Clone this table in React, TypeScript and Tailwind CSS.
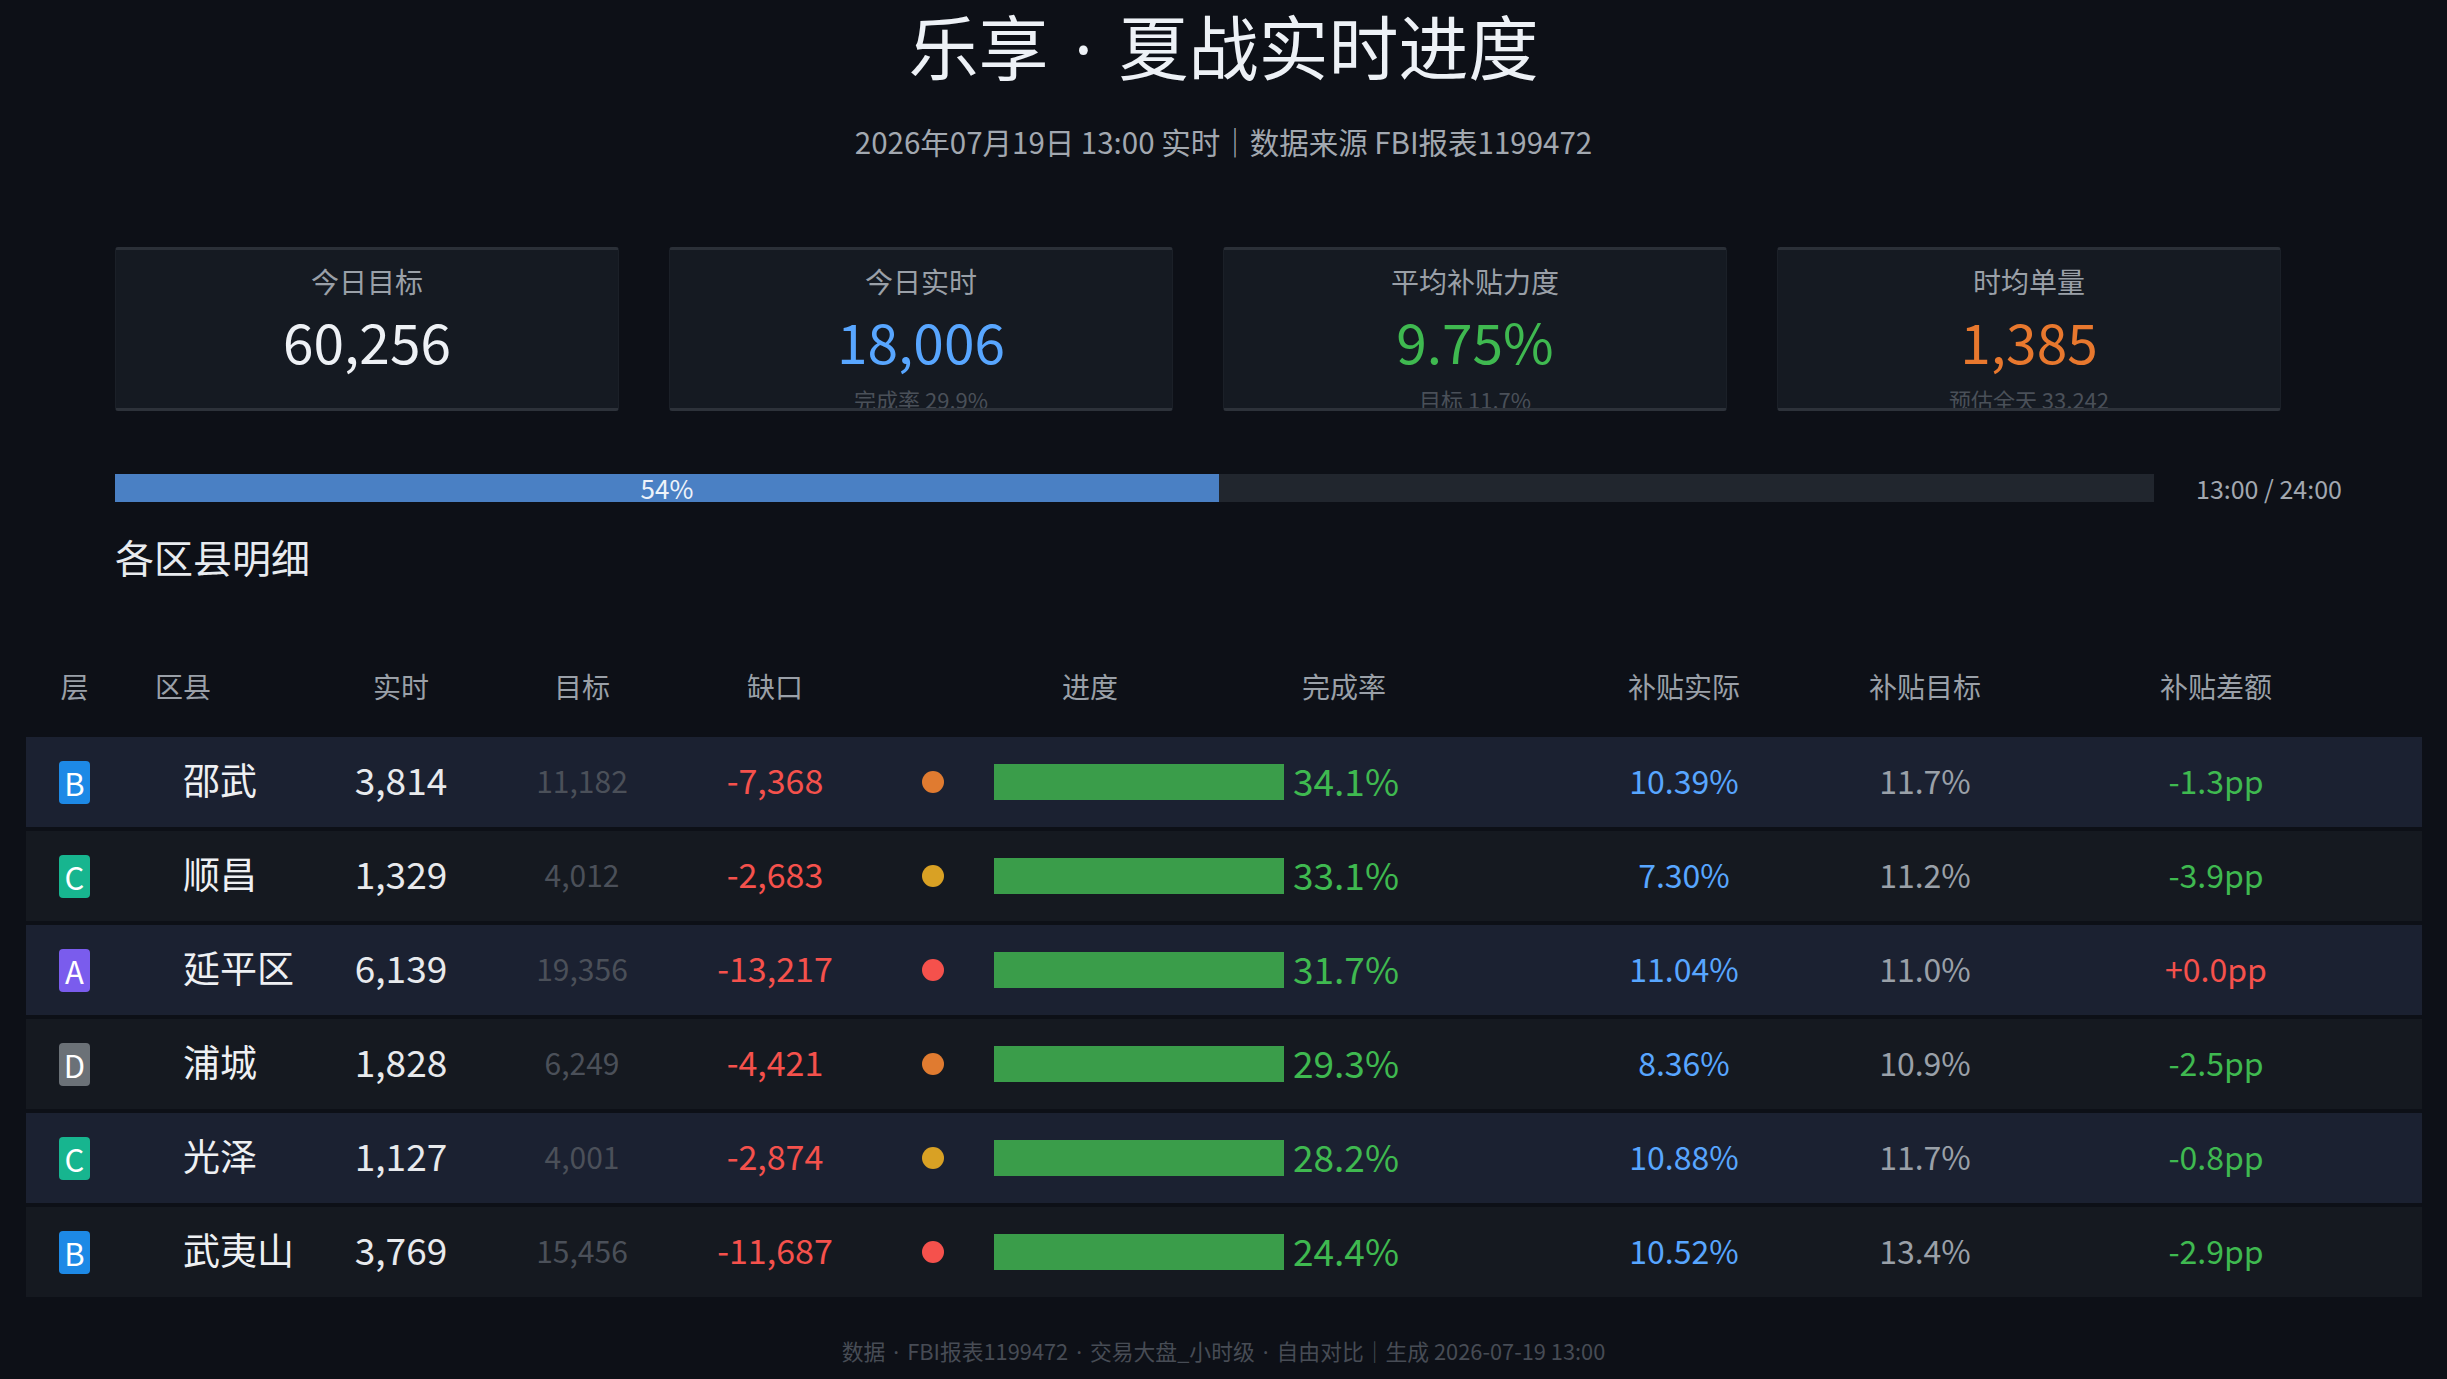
import React from "react";

type Row = {
  tier: string;
  tierBg: string;
  name: string;
  rt: string;
  tg: string;
  gap: string;
  dot: string;
  pct: string;
  sa: string;
  st: string;
  diff: string;
  diffColor: string;
};

const ORANGE = "bg-[#e07b30]";
const AMBER = "bg-[#d9a124]";
const RED = "bg-[#f5514c]";
const BLUE = "bg-[#1d89e6]";
const TEAL = "bg-[#17b58f]";
const PURPLE = "bg-[#7a5ced]";
const GRAY = "bg-[#6b7177]";
const GREEN_T = "text-[#3fb950]";
const RED_T = "text-[#f5514c]";

const rows: Row[] = [
  { tier: "B", tierBg: BLUE, name: "邵武", rt: "3,814", tg: "11,182", gap: "-7,368", dot: ORANGE, pct: "34.1%", sa: "10.39%", st: "11.7%", diff: "-1.3pp", diffColor: GREEN_T },
  { tier: "C", tierBg: TEAL, name: "顺昌", rt: "1,329", tg: "4,012", gap: "-2,683", dot: AMBER, pct: "33.1%", sa: "7.30%", st: "11.2%", diff: "-3.9pp", diffColor: GREEN_T },
  { tier: "A", tierBg: PURPLE, name: "延平区", rt: "6,139", tg: "19,356", gap: "-13,217", dot: RED, pct: "31.7%", sa: "11.04%", st: "11.0%", diff: "+0.0pp", diffColor: RED_T },
  { tier: "D", tierBg: GRAY, name: "浦城", rt: "1,828", tg: "6,249", gap: "-4,421", dot: ORANGE, pct: "29.3%", sa: "8.36%", st: "10.9%", diff: "-2.5pp", diffColor: GREEN_T },
  { tier: "C", tierBg: TEAL, name: "光泽", rt: "1,127", tg: "4,001", gap: "-2,874", dot: AMBER, pct: "28.2%", sa: "10.88%", st: "11.7%", diff: "-0.8pp", diffColor: GREEN_T },
  { tier: "B", tierBg: BLUE, name: "武夷山", rt: "3,769", tg: "15,456", gap: "-11,687", dot: RED, pct: "24.4%", sa: "10.52%", st: "13.4%", diff: "-2.9pp", diffColor: GREEN_T },
];

function Dot() {
  return <span className="inline-block w-[1em] text-center font-['Noto_Sans',sans-serif]">·</span>;
}

function Card({ label, value, valueColor, sub }: { label: string; value: string; valueColor: string; sub?: string }) {
  return (
    <div className="w-[504px] h-[164px] bg-[#151a22] border-t-[3px] border-b-[3px] border-x border-t-[#2b3038] border-b-[#2d323a] border-x-[#1b2028] rounded-[3px] overflow-hidden flex flex-col items-center pt-[17px]">
      <div className="text-[28px] leading-[28px] text-[#9aa0a8]">{label}</div>
      <div className={`mt-[17px] text-[55px] leading-[56px] ${valueColor}`}>{value}</div>
      {sub && <div className="mt-[20px] text-[22px] leading-[22px] text-[#4a5059] whitespace-nowrap">{sub}</div>}
    </div>
  );
}

export default function App() {
  return (
    <div className="w-[2447px] h-[1379px] overflow-hidden bg-[#0d1017] font-['Noto_Sans_CJK_SC','Noto_Sans',sans-serif] flex flex-col">
      <div className="h-[80px] shrink-0 pt-[10px] text-center text-[70px] leading-[70px] text-[#edf1f6] whitespace-nowrap">
        乐享<Dot />夏战实时进度
      </div>
      <div className="mt-[46px] text-center text-[29.5px] leading-[30px] text-[#a2a8b0] whitespace-nowrap">
        2026年07月19日 13:00 实时｜数据来源 FBI报表1199472
      </div>

      <div className="mt-[91px] pl-[115px] flex gap-[50px]">
        <Card label="今日目标" value="60,256" valueColor="text-[#eef1f5]" />
        <Card label="今日实时" value="18,006" valueColor="text-[#58a6ff]" sub="完成率 29.9%" />
        <Card label="平均补贴力度" value="9.75%" valueColor="text-[#3fb950]" sub="目标 11.7%" />
        <Card label="时均单量" value="1,385" valueColor="text-[#e8782e]" sub="预估全天 33,242" />
      </div>

      <div className="mt-[63px] pl-[115px] flex items-center">
        <div className="w-[2039px] h-[28px] bg-[#21262e] flex">
          <div className="w-[1104px] h-full bg-[#4a80c4] flex items-center justify-center text-[26px] leading-[26px] text-[#eef3fa]">
            54%
          </div>
        </div>
        <div className="ml-[42px] text-[25px] leading-[26px] text-[#a2a8b0] whitespace-nowrap">13:00 / 24:00</div>
      </div>

      <div className="mt-[34px] pl-[115px] text-[39px] leading-[40px] text-[#e8ebef]">各区县明细</div>

      <div className="mt-[96px] ml-[26px] flex items-center text-[28px] leading-[28px] text-[#9aa0a8] whitespace-nowrap">
        <div className="w-[97px] text-center">层</div>
        <div className="w-[207px] pl-[32px]">区县</div>
        <div className="w-[142px] text-center">实时</div>
        <div className="w-[220px] text-center">目标</div>
        <div className="w-[166px] text-center">缺口</div>
        <div className="w-[136px]" />
        <div className="w-[192px] text-center">进度</div>
        <div className="w-[316px] text-center">完成率</div>
        <div className="w-[58px]" />
        <div className="w-[248px] text-center">补贴实际</div>
        <div className="w-[234px] text-center">补贴目标</div>
        <div className="w-[348px] text-center">补贴差额</div>
      </div>

      <div className="mt-[37px] ml-[26px] w-[2396px] flex flex-col gap-[4px]">
        {rows.map((r, i) => (
          <div key={i} className={`h-[90px] flex items-center whitespace-nowrap ${i % 2 === 0 ? "bg-[#1b2131]" : "bg-[#151920]"}`}>
            <div className="w-[97px] flex justify-center">
              <div className={`w-[31px] h-[43px] rounded-[4px] ${r.tierBg} flex items-center justify-center text-[31px] leading-[31px] text-white`}>
                {r.tier}
              </div>
            </div>
            <div className="w-[207px] pl-[60px] pb-[5px] text-[37px] leading-[37px] text-[#eef0f3]">{r.name}</div>
            <div className="w-[142px] pb-[5px] text-center text-[37px] leading-[37px] text-[#e8eaed]">{r.rt}</div>
            <div className="w-[220px] pb-[5px] text-center text-[30px] leading-[30px] text-[#4b5059]">{r.tg}</div>
            <div className="w-[166px] pb-[5px] text-center text-[34px] leading-[34px] text-[#f5514c]">{r.gap}</div>
            <div className="w-[136px] flex justify-end pr-[50px]">
              <div className={`w-[22px] h-[22px] rounded-full ${r.dot}`} />
            </div>
            <div className="w-[566px] flex items-center">
              <div className="w-[290px] h-[36px] bg-[#3a9d4a]" />
              <div className="ml-[9px] pb-[3px] text-[37px] leading-[37px] text-[#3fb950]">{r.pct}</div>
            </div>
            <div className="w-[248px] pb-[5px] text-center text-[32px] leading-[32px] text-[#58a6ff]">{r.sa}</div>
            <div className="w-[234px] pb-[5px] text-center text-[32px] leading-[32px] text-[#9aa0a8]">{r.st}</div>
            <div className={`w-[348px] pb-[5px] text-center text-[32px] leading-[32px] ${r.diffColor}`}>{r.diff}</div>
          </div>
        ))}
      </div>

      <div className="mt-[43px] text-center text-[21.8px] leading-[22px] text-[#474c55] whitespace-nowrap">
        数据<Dot />FBI报表1199472<Dot />交易大盘_小时级<Dot />自由对比｜生成 2026-07-19 13:00
      </div>
    </div>
  );
}
